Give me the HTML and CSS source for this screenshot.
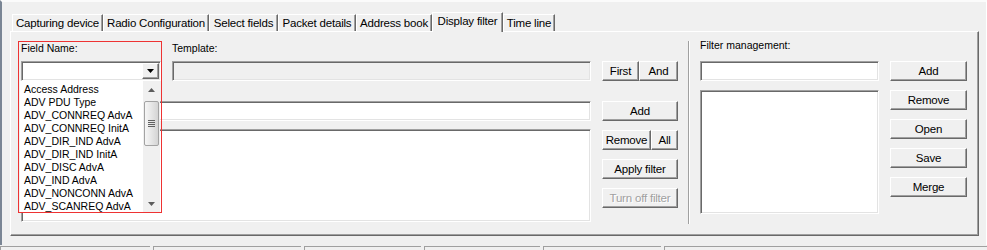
FILE: index.html
```html
<!DOCTYPE html>
<html lang="en">
<head>
  <meta charset="UTF-8" />
  <title>Display filter</title>
  <link rel="stylesheet" href="styles.css">
</head>
<body>
  <div class="window">
    <div class="tabs">
      <div class="tab">Capturing device</div>
      <div class="tab">Radio Configuration</div>
      <div class="tab">Select fields</div>
      <div class="tab">Packet details</div>
      <div class="tab">Address book</div>
      <div class="tab active">Display filter</div>
      <div class="tab">Time line</div>
    </div>

    <div class="panel">
      <!-- filter editor -->
      <div class="filter-area">
        <div class="top-row">
          <div class="field">
            <label class="caption">Field Name:</label>
            <div class="edit combo">
              <span class="combo-btn">
                <svg width="7" height="4" viewBox="0 0 7 4"><path d="M0 0h7L3.5 4z" fill="#000"/></svg>
              </span>
            </div>

            <div class="dropdown">
              <ul class="items">
                <li>Access Address</li>
                <li>ADV PDU Type</li>
                <li>ADV_CONNREQ AdvA</li>
                <li>ADV_CONNREQ InitA</li>
                <li>ADV_DIR_IND AdvA</li>
                <li>ADV_DIR_IND InitA</li>
                <li>ADV_DISC AdvA</li>
                <li>ADV_IND AdvA</li>
                <li>ADV_NONCONN AdvA</li>
                <li>ADV_SCANREQ AdvA</li>
              </ul>
              <div class="scrollbar">
                <span class="scroll-btn">
                  <svg width="7" height="4" viewBox="0 0 7 4"><path d="M0 4h7L3.5 0z" fill="#5c5c5c"/></svg>
                </span>
                <span class="thumb">
                  <svg width="7" height="8" viewBox="0 0 7 8">
                    <rect y="0" width="7" height="1" fill="#616161"/>
                    <rect y="2" width="7" height="1" fill="#616161"/>
                    <rect y="4" width="7" height="1" fill="#616161"/>
                    <rect y="6" width="7" height="1" fill="#616161"/>
                  </svg>
                </span>
                <span class="scroll-btn bottom">
                  <svg width="7" height="4" viewBox="0 0 7 4"><path d="M0 0h7L3.5 4z" fill="#5c5c5c"/></svg>
                </span>
              </div>
            </div>
            <div class="highlight"></div>
          </div>

          <div class="template">
            <label class="caption">Template:</label>
            <div class="edit disabled"></div>
          </div>
        </div>

        <div class="edit value"></div>
        <div class="edit memo"></div>
      </div>

      <div class="btn-col">
        <div class="btn-pair">
          <button class="btn first">First</button>
          <button class="btn and">And</button>
        </div>
        <button class="btn add">Add</button>
        <div class="btn-pair">
          <button class="btn remove">Remove</button>
          <button class="btn all">All</button>
        </div>
        <button class="btn">Apply filter</button>
        <button class="btn" disabled>Turn off filter</button>
      </div>

      <div class="sep"></div>

      <!-- saved filters -->
      <div class="manage">
        <label class="caption">Filter management:</label>
        <div class="manage-grid">
          <div class="edit name"></div>
          <button class="btn">Add</button>
          <div class="edit filter-list"></div>
          <button class="btn">Remove</button>
          <button class="btn">Open</button>
          <button class="btn">Save</button>
          <button class="btn">Merge</button>
        </div>
      </div>
    </div>
  </div>

  <div class="statusbar">
    <div class="cell"></div>
    <div class="cell"></div>
    <div class="cell"></div>
    <div class="cell"></div>
    <div class="cell"></div>
    <div class="cell"></div>
  </div>
</body>
</html>
```

FILE: styles.css
```css
body {
  margin: 0;
  background: #f0f0f0;
  font-family: "Liberation Sans", Arial, sans-serif;
  font-size: 10.5px;
  color: #000;
  overflow: hidden;
}
.window {
  box-sizing: border-box;
  height: 245px;
  border-top: 2px solid #fbfbfb;
  border-left: 2px solid #7a8594;
  border-right: 1px solid #fff;
}

/* tabs */
.tabs {
  display: flex;
  align-items: flex-end;
  height: 19px;
  margin-top: 10px;
  padding-left: 10px;
  font-size: 11.5px;
  letter-spacing: -0.2px;
}
.tab {
  box-sizing: border-box;
  height: 17px;
  line-height: 16px;
  text-align: center;
  white-space: nowrap;
  border-top: 1px solid #fff;
  border-left: 1px solid #fff;
  border-right: 1px solid #696969;
  box-shadow: inset -1px 0 #a0a0a0;
}
.tab:nth-child(1) { width: 91px; }
.tab:nth-child(2) { width: 106px; }
.tab:nth-child(3) { width: 69px; }
.tab:nth-child(4) { width: 78px; }
.tab:nth-child(5) { width: 76px; }
.tab:nth-child(6) { width: 71px; }
.tab:nth-child(7) { width: 52px; }
.tab.active {
  position: relative;
  z-index: 1;
  height: 20px;
  margin-bottom: -1px;
  background: #f0f0f0;
}

/* tab page */
.panel {
  box-sizing: border-box;
  display: flex;
  align-items: flex-start;
  width: 969px;
  height: 205px;
  margin-left: 8px;
  border-top: 1px solid #fff;
  border-left: 1px solid #fff;
  border-right: 1px solid #696969;
  border-bottom: 1px solid #696969;
  box-shadow: inset -1px -1px #a0a0a0;
}
.caption {
  display: block;
  box-sizing: border-box;
  height: 20px;
  padding-top: 1px;
  line-height: 13px;
  white-space: nowrap;
}
.edit {
  box-sizing: border-box;
  height: 20px;
  background: #fff;
  border: 1px solid;
  border-color: #a0a0a0 #fff #fff #a0a0a0;
  box-shadow: inset 1px 1px #696969, inset -1px -1px #e3e3e3;
}
.edit.disabled {
  background: #f0f0f0;
}

.filter-area {
  width: 570px;
  margin-left: 10px;
  padding-top: 9px;
}
.top-row {
  display: flex;
  gap: 11px;
}
.field {
  position: relative;
  width: 140px;
}
.template {
  flex: 1;
}
.edit.value {
  margin-top: 20px;
}
.edit.memo {
  height: 93px;
  margin-top: 8px;
}

/* combobox */
.combo {
  display: flex;
  justify-content: flex-end;
  padding: 1px;
}
.combo-btn {
  box-sizing: border-box;
  display: flex;
  align-items: center;
  justify-content: center;
  width: 17px;
  height: 16px;
  background: #f0f0f0;
  border: 1px solid;
  border-color: #fff #696969 #696969 #fff;
  box-shadow: inset -1px -1px #a0a0a0;
}
.dropdown {
  position: absolute;
  top: 40px;
  left: -1px;
  z-index: 2;
  width: 140px;
  height: 131px;
  overflow: hidden;
  background: #fff;
}
.items {
  list-style: none;
  margin: 0;
  padding: 2px 0 0 4px;
}
.items li {
  height: 13px;
  line-height: 13px;
  white-space: nowrap;
}
.scrollbar {
  position: absolute;
  top: 0;
  right: 0;
  display: flex;
  flex-direction: column;
  width: 17px;
  height: 131px;
  background: #f0f0f0;
}
.scroll-btn {
  display: flex;
  align-items: center;
  justify-content: center;
  height: 17px;
}
.scroll-btn.bottom {
  margin-top: auto;
}
.thumb {
  box-sizing: border-box;
  display: flex;
  align-items: center;
  justify-content: center;
  width: 15px;
  height: 45px;
  margin: 3px 0 0 1px;
  border: 1px solid #a3a3a3;
  border-radius: 2px;
  background: linear-gradient(to right, #f6f6f6, #e6e6e6 50%, #d4d4d4);
}
.highlight {
  position: absolute;
  top: 0;
  left: -3px;
  z-index: 3;
  box-sizing: border-box;
  width: 144px;
  height: 172px;
  border: 1px solid #ee3333;
  pointer-events: none;
}

/* buttons */
.btn {
  box-sizing: border-box;
  height: 20px;
  padding: 0;
  background: #f0f0f0;
  border: 1px solid;
  border-color: #fff #696969 #696969 #fff;
  border-radius: 0;
  box-shadow: inset -1px -1px #a0a0a0;
  font-family: "Liberation Sans", Arial, sans-serif;
  font-size: 11.5px;
  letter-spacing: -0.2px;
  line-height: 18px;
  color: #000;
  white-space: nowrap;
}
.btn:disabled {
  color: #a0a0a0;
  text-shadow: 1px 1px #fff;
}
.btn-col {
  display: flex;
  flex-direction: column;
  gap: 9px;
  width: 76px;
  margin-left: 11px;
  padding-top: 29px;
}
.btn-pair {
  display: flex;
}
.btn.first { width: 37px; }
.btn.and { width: 39px; }
.btn.remove { width: 49px; }
.btn.all { width: 27px; }
.btn.add { margin-top: 11px; }

.sep {
  width: 0;
  height: 183px;
  margin: 9px 0 0 10px;
  border-left: 1px solid #a0a0a0;
  border-right: 1px solid #fff;
}

.manage {
  margin-left: 10px;
  padding-top: 7px;
}
.manage .caption {
  height: 22px;
  padding-top: 0;
}
.manage-grid {
  display: grid;
  grid-template-columns: 179px 77px;
  grid-template-rows: repeat(5, 20px);
  column-gap: 11px;
  row-gap: 9px;
}
.manage-grid .edit {
  grid-column: 1;
}
.manage-grid .btn {
  grid-column: 2;
}
.filter-list {
  grid-row: 2 / 6;
  height: 124px !important;
}

/* status bar */
.statusbar {
  display: flex;
  gap: 3px;
  margin-top: 1px;
}
.cell {
  box-sizing: border-box;
  width: 117px;
  height: 10px;
  border-top: 1px solid #a0a0a0;
  border-left: 1px solid #a0a0a0;
}
.cell:nth-child(1) { width: 150px; }
.cell:nth-child(2) { width: 148px; }
.cell:nth-child(4) { width: 116px; }
.cell:nth-child(5) { width: 118px; }
.cell:last-child { flex: 1; }
```
